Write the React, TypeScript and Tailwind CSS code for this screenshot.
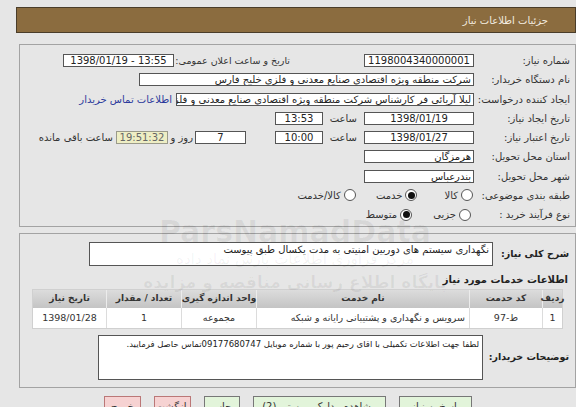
import React from "react";

const font = "font-['Tahoma','DejaVu_Sans',sans-serif]";

function Box({
  w,
  children,
  align = "center",
  ltr,
  className = "",
}: {
  w: string;
  children?: React.ReactNode;
  align?: "center" | "right";
  ltr?: boolean;
  className?: string;
}) {
  return (
    <div
      dir={ltr ? "ltr" : undefined}
      className={`${w} h-[13px] shrink-0 overflow-hidden whitespace-nowrap border border-[#555] bg-white px-[2px] text-[10px] leading-[11px] text-[#222] ${
        align === "center" ? "text-center" : "text-right"
      } ${className}`}
    >
      {children}
    </div>
  );
}

function Radio({ on, label, className = "" }: { on?: boolean; label: string; className?: string }) {
  return (
    <div className={`flex items-center gap-[3px] ${className}`}>
      <span className="flex h-[12px] w-[12px] items-center justify-center rounded-full border border-[#555] bg-white">
        {on && <span className="h-[7px] w-[7px] rounded-full bg-[#111]" />}
      </span>
      <span className="whitespace-nowrap text-[10px] text-[#333]">{label}</span>
    </div>
  );
}

function Row({ label, children }: { label: string; children?: React.ReactNode }) {
  return (
    <div className="flex h-[19.25px] items-center">
      <div className="w-[96px] shrink-0 whitespace-nowrap text-[10px] text-[#333]">{label}</div>
      {children}
    </div>
  );
}

const cols = [
  { title: "ردیف", w: "w-[20px]" },
  { title: "کد حدمت", w: "w-[73px]" },
  { title: "نام خدمت", w: "w-[213px]" },
  { title: "واحد اندازه گیری", w: "w-[75px]" },
  { title: "تعداد / مقدار", w: "w-[75px]" },
  { title: "تاریخ نیاز", w: "w-[75px]" },
];

const cells = ["1", "ط-97", "سرویس و نگهداری و پشتیبانی رایانه و شبکه", "مجموعه", "1", "1398/01/28"];

const txt = "whitespace-nowrap text-[10px] text-[#333]";

export default function App() {
  return (
    <div dir="rtl" className={`relative h-[407px] w-[576px] overflow-hidden bg-[#e6e6e6] ${font}`}>
      <div className="ml-[8px] mt-[7px] flex h-[26px] w-[560px] items-center border border-[#4a3d2a] bg-[#8b6c3f] pr-[27px] text-[10px] text-[#f3ece0]">
        جزئیات اطلاعات نیاز
      </div>

      <div className="ml-[9px] mt-[11px] h-[183px] w-[557px] border border-[#a3a3a3] bg-[#e6e6e6] pr-[5px] pt-[6px]">
        <Row label="شماره نیاز:">
          <Box w="w-[110px]">1198004340000001</Box>
          <div className="mr-[74px] w-[114px] shrink-0 whitespace-nowrap text-[9.5px] text-[#333]">تاریخ و ساعت اعلان عمومی:</div>
          <Box w="w-[111px]" ltr className="mr-[2px]">1398/01/19 - 13:55</Box>
        </Row>
        <Row label="نام دستگاه خریدار:">
          <Box w="w-[335px]" align="right">شرکت منطقه ویژه اقتصادی صنایع معدنی و فلزی خلیج فارس</Box>
        </Row>
        <Row label="ایجاد کننده درخواست:">
          <Box w="w-[298px]" align="right">لیلا آریائی فر کارشناس شرکت منطقه ویژه اقتصادی صنایع معدنی و فلزی خلیج</Box>
          <div className="mr-[4px] whitespace-nowrap text-[10px] text-[#2b3a9c]">اطلاعات تماس خریدار</div>
        </Row>
        <Row label="تاریخ ایجاد نیاز:">
          <Box w="w-[110px]">1398/01/19</Box>
          <div className={`mr-[7px] w-[30px] shrink-0 ${txt}`}>ساعت</div>
          <Box w="w-[48px]" className="mr-[4px]">13:53</Box>
        </Row>
        <Row label="تاریخ اعتبار نیاز:">
          <Box w="w-[110px]">1398/01/27</Box>
          <div className={`mr-[7px] w-[30px] shrink-0 ${txt}`}>ساعت</div>
          <Box w="w-[48px]" className="mr-[4px]">10:00</Box>
          <Box w="w-[51px]" className="mr-[29px]">7</Box>
          <div className={`mr-[2px] w-[23px] shrink-0 ${txt}`}>روز و</div>
          <div className="mr-[2px] h-[13px] w-[52px] shrink-0 border border-[#9a9a8a] bg-[#eeeec4] text-center text-[10px] leading-[11px] text-[#666]">
            19:51:32
          </div>
          <div className={`mr-[3px] ${txt}`}>ساعت باقی مانده</div>
        </Row>
        <Row label="استان محل تحویل:">
          <Box w="w-[110px]" align="right">هرمزگان</Box>
        </Row>
        <Row label="شهر محل تحویل:">
          <Box w="w-[110px]" align="right">بندرعباس</Box>
        </Row>
        <Row label="طبقه بندی موضوعی:">
          <Radio label="کالا" className="mr-[1px]" />
          <Radio on label="خدمت" className="mr-[27px]" />
          <Radio label="کالا/خدمت" className="mr-[20px]" />
        </Row>
        <Row label="نوع فرآیند خرید :">
          <Radio label="جزیی" className="mr-[3px]" />
          <Radio on label="متوسط" className="mr-[21px]" />
        </Row>
      </div>

      <div className="ml-[9px] mt-[6px] h-[155px] w-[557px] border border-[#a3a3a3] bg-[#e6e6e6] pl-[12px] pr-[6px] pt-[8px]">
        <div className="flex items-center">
          <div className="w-[76px] shrink-0 whitespace-nowrap text-[9.5px] font-bold text-[#222]">شرح کلی نیاز:</div>
          <div className="h-[24px] w-[404px] overflow-hidden whitespace-nowrap border border-[#555] bg-white px-[3px] text-right text-[10px] leading-[14px] text-[#222]">
            نگهداری سیستم های دوربین امنیتی به مدت یکسال طبق پیوست
          </div>
        </div>
        <div className="mt-[6px] whitespace-nowrap pr-[1px] text-[10px] font-bold text-[#222]">اطلاعات خدمات مورد نیاز</div>
        <div className="mr-[6px] mt-[2px] w-[531px] border border-[#d0d0d0] bg-white">
          <div className="flex h-[18px] bg-gradient-to-b from-[#dcdcdc] to-[#c4c4c4]">
            {cols.map((c, i) => (
              <div
                key={i}
                className={`${c.w} ${i === cols.length - 1 ? "grow" : "shrink-0 border-l border-[#ececec]"} flex items-center justify-center whitespace-nowrap text-[9px] font-bold text-[#333]`}
              >
                {c.title}
              </div>
            ))}
          </div>
          <div className="flex h-[20px]">
            {cells.map((c, i) => (
              <div
                key={i}
                className={`${cols[i].w} ${i === cells.length - 1 ? "grow" : "shrink-0 border-l border-[#dcdcdc]"} flex items-center ${i === 2 ? "justify-start pr-[4px]" : "justify-center"} overflow-hidden whitespace-nowrap text-[9.5px] text-[#333]`}
              >
                {c}
              </div>
            ))}
          </div>
        </div>
        <div className="mt-[6px] flex items-center">
          <div className="w-[86px] shrink-0 whitespace-nowrap text-[9.5px] font-bold text-[#222]">توضیحات خریدار:</div>
          <div className="h-[45px] w-[385px] overflow-hidden whitespace-nowrap border border-[#555] bg-white px-[3px] pt-[1px] text-right text-[8.5px] leading-[14px] text-[#222]">
            لطفا جهت اطلاعات تکمیلی با اقای رحیم پور با شماره موبایل 09177680747تماس حاصل فرمایید.
          </div>
        </div>
      </div>

      <div className="mr-[104px] mt-[8px] flex gap-[13px]">
        <div className="h-[20px] w-[73px] whitespace-nowrap border border-[#777] bg-[#e2f4da] pt-[2px] text-center text-[10px] text-[#333]">پاسخ به نیاز</div>
        <div className="h-[20px] w-[133px] whitespace-nowrap border border-[#777] bg-[#e2f4da] pt-[2px] text-center text-[10px] text-[#333]">مشاهده مدارک پیوستی (2)</div>
        <div className="h-[20px] w-[36px] whitespace-nowrap border border-[#777] bg-[#e2f4da] pt-[2px] text-center text-[10px] text-[#333]">چاپ</div>
        <div className="h-[20px] w-[37px] whitespace-nowrap border border-[#b77] bg-[#f6d2d2] pt-[2px] text-center text-[10px] text-[#333]">بازگشت</div>
        <div className="h-[20px] w-[37px] whitespace-nowrap border border-[#b77] bg-[#f6d2d2] pt-[2px] text-center text-[10px] text-[#333]">خروج</div>
      </div>

      <div className="pointer-events-none absolute left-[150px] top-[216px] flex w-[290px] flex-col items-center text-[#000]/[0.06]" dir="ltr">
        <div className="font-['DejaVu_Sans',sans-serif] text-[30px] font-bold leading-[32px]">ParsNamadData</div>
        <div className="mt-[2px] whitespace-nowrap text-[15px] leading-[18px]" dir="rtl">مرکز فراوری اطلاعات پارس نماد داده</div>
        <div className="mt-[4px] whitespace-nowrap text-[17px] font-bold leading-[20px]" dir="rtl">پایگاه اطلاع رسانی مناقصه و مزایده</div>
      </div>
    </div>
  );
}
